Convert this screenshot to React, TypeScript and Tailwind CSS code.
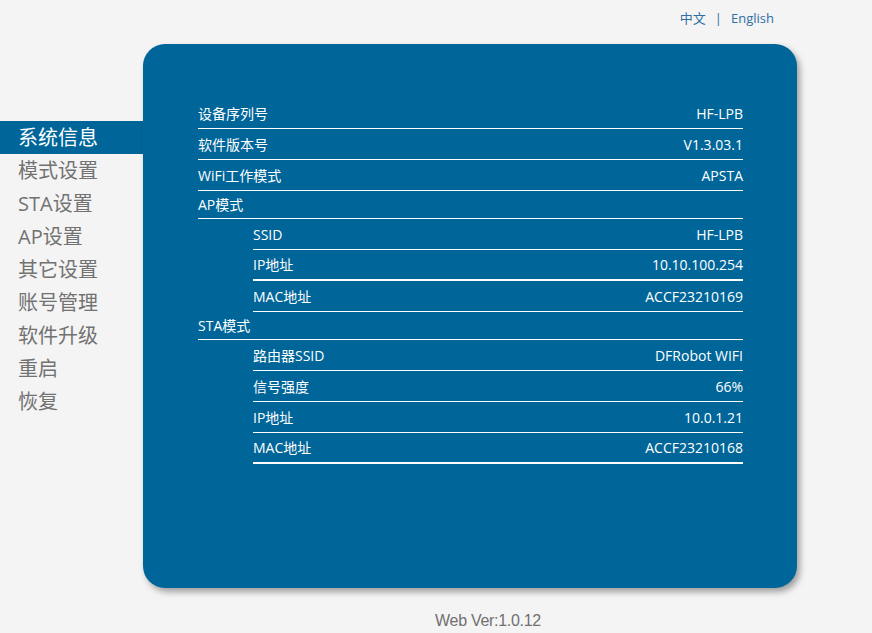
import React from "react";

interface Row {
  label: string;
  value?: string;
  indent?: boolean;
  header?: boolean;
  thick?: boolean;
}

const menu = ["系统信息", "模式设置", "STA设置", "AP设置", "其它设置", "账号管理", "软件升级", "重启", "恢复"];

const rows: Row[] = [
  { label: "设备序列号", value: "HF-LPB" },
  { label: "软件版本号", value: "V1.3.03.1" },
  { label: "WiFi工作模式", value: "APSTA" },
  { label: "AP模式", header: true },
  { label: "SSID", value: "HF-LPB", indent: true },
  { label: "IP地址", value: "10.10.100.254", indent: true, thick: true },
  { label: "MAC地址", value: "ACCF23210169", indent: true },
  { label: "STA模式", header: true },
  { label: "路由器SSID", value: "DFRobot WIFI", indent: true },
  { label: "信号强度", value: "66%", indent: true },
  { label: "IP地址", value: "10.0.1.21", indent: true },
  { label: "MAC地址", value: "ACCF23210168", indent: true, thick: true },
];

const cjk = "font-['Segoe_UI','Open_Sans','Noto_Sans_CJK_SC',sans-serif]";

export default function App() {
  return (
    <div className={`min-h-[633px] w-[872px] bg-[#f4f4f4] ${cjk}`}>
      {/* language switch */}
      <div className="flex h-[44px] w-[774px] items-start justify-end pt-[9px] text-[13px] text-[#2f6ea3]">
        <span>中文</span>
        <span className="mx-[9px]">|</span>
        <span>English</span>
      </div>

      <div className="flex">
        <ul className="mt-[77px] w-[143px]">
          {menu.map((m, i) => (
            <li
              key={m}
              className={`flex h-[33px] items-center pl-[18px] text-[20px] ${
                i === 0 ? "bg-[#006699] text-white" : "text-[#727272]"
              }`}
            >
              {m}
            </li>
          ))}
        </ul>

        <div className="h-[544px] w-[654px] rounded-[22px] bg-[#006699] pl-[55px] pr-[54px] pt-[54px] text-[14px] text-white shadow-[3px_4px_6px_rgba(0,0,0,0.35)]">
          {rows.map((r, i) => (
            <div
              key={i}
              className={`flex items-center justify-between border-white ${
                r.header ? "h-[28px]" : r.thick ? "h-[31px] border-b-2" : "h-[31px]"
              } ${r.thick ? "" : "border-b"} ${r.indent ? "ml-[55px]" : ""}`}
            >
              <span>{r.label}</span>
              {r.value && <span>{r.value}</span>}
            </div>
          ))}
        </div>
      </div>

      <div className="w-[872px] pl-[104px] pt-[21px] text-center font-['Liberation_Sans',sans-serif] text-[16px] tracking-[-0.3px] text-[#707070]">
        Web Ver:1.0.12
      </div>
    </div>
  );
}
